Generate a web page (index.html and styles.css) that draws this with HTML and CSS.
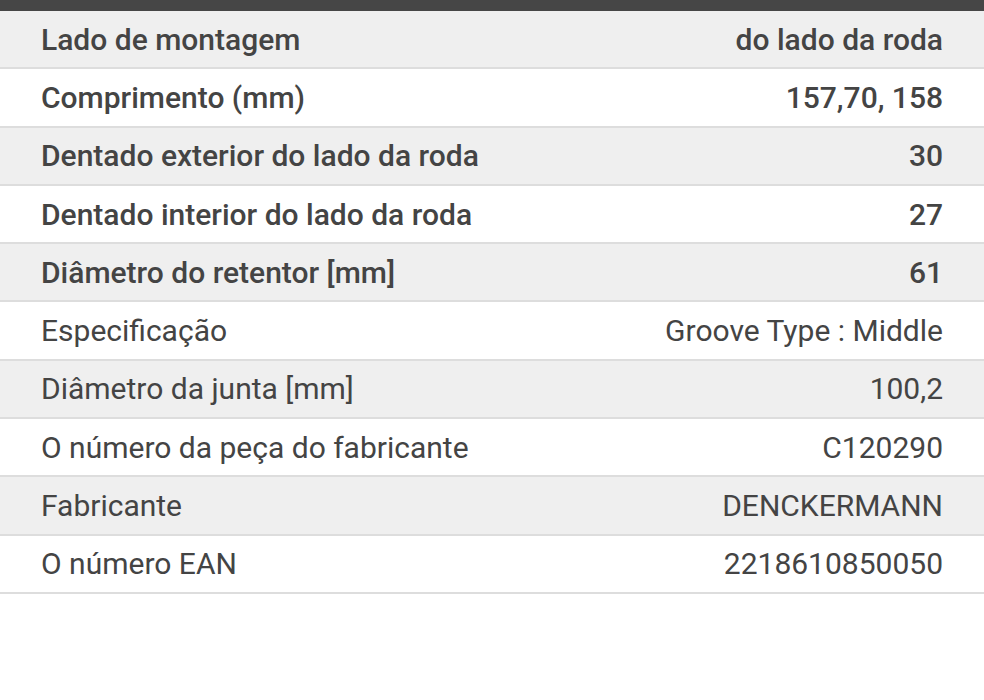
FILE: index.html
```html
<!DOCTYPE html>
<html lang="pt">
<head>
<meta charset="utf-8">
<title>Especificações</title>
<link rel="stylesheet" href="styles.css">
</head>
<body>
<div class="topbar"></div>
<div class="specs">
  <div class="row alt strong"><span class="k">Lado de montagem</span><span class="v">do lado da roda</span></div>
  <div class="row strong"><span class="k">Comprimento (mm)</span><span class="v">157,70, 158</span></div>
  <div class="row alt strong"><span class="k">Dentado exterior do lado da roda</span><span class="v">30</span></div>
  <div class="row strong"><span class="k">Dentado interior do lado da roda</span><span class="v">27</span></div>
  <div class="row alt strong"><span class="k">Diâmetro do retentor [mm]</span><span class="v">61</span></div>
  <div class="row"><span class="k">Especificação</span><span class="v">Groove Type : Middle</span></div>
  <div class="row alt"><span class="k">Diâmetro da junta [mm]</span><span class="v">100,2</span></div>
  <div class="row"><span class="k">O número da peça do fabricante</span><span class="v">C120290</span></div>
  <div class="row alt"><span class="k">Fabricante</span><span class="v">DENCKERMANN</span></div>
  <div class="row"><span class="k">O número EAN</span><span class="v">2218610850050</span></div>
</div>
</body>
</html>
```
FILE: styles.css
```css
html, body {
  margin: 0;
  padding: 0;
  background: #ffffff;
}
body {
  font-family: Roboto, "Noto Sans", sans-serif;
  color: #444444;
}
.topbar {
  height: 11px;
  background: #464646;
}
.row {
  display: flex;
  justify-content: space-between;
  align-items: center;
  height: 56.3px;
  padding: 0 41px;
  border-bottom: 2px solid #dddddd;
  font-size: 30px;
  font-weight: 400;
  background: #ffffff;
}
.row.alt {
  background: #efefef;
}
.row.strong {
  font-weight: 500;
}
```
